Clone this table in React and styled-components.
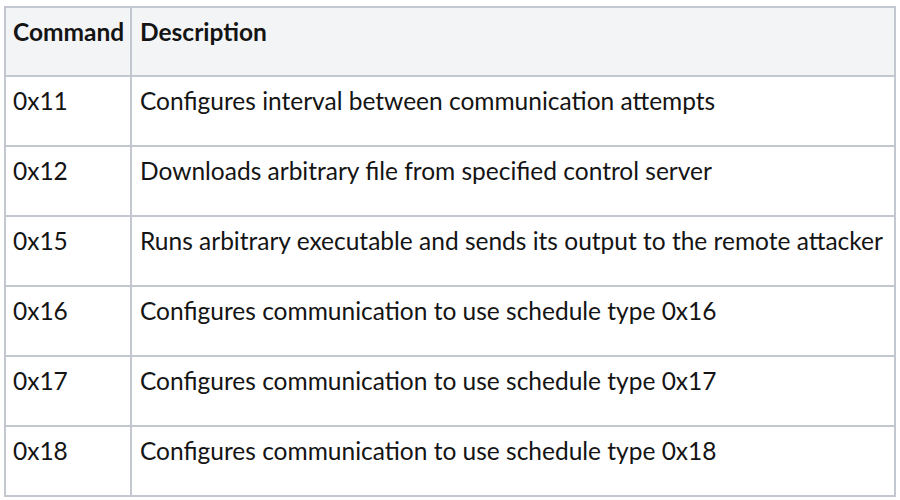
import React from 'react';
import styled, { createGlobalStyle } from 'styled-components';

const GlobalStyle = createGlobalStyle`
  body {
    margin: 0;
    background: #ffffff;
    font-family: Lato, "Open Sans", sans-serif;
  }
`;

const Page = styled.div`
  padding: 6px 4px 0 4px;
`;

const Table = styled.table`
  width: 892px;
  border-collapse: collapse;
  table-layout: fixed;
  color: #141414;
  font-size: 24.5px;
  line-height: 30px;

  & col.cmd {
    width: 126px;
  }
`;

const HeadCell = styled.th`
  box-sizing: border-box;
  background: #f3f4f6;
  border: 2px solid #c3c7cf;
  height: 69px;
  padding: 9px 0 0 ${props => (props.$first ? '7px' : '8px')};
  text-align: left;
  vertical-align: top;
  font-weight: 700;
`;

const Cell = styled.td`
  box-sizing: border-box;
  border: 2px solid #c3c7cf;
  height: 70px;
  padding: 9px 0 0 ${props => (props.$first ? '7px' : '8px')};
  vertical-align: top;
  white-space: nowrap;
`;

const rows = [
  { id: '0x11', text: 'Configures interval between communication attempts' },
  { id: '0x12', text: 'Downloads arbitrary file from specified control server' },
  { id: '0x15', text: 'Runs arbitrary executable and sends its output to the remote attacker' },
  { id: '0x16', text: 'Configures communication to use schedule type 0x16' },
  { id: '0x17', text: 'Configures communication to use schedule type 0x17' },
  { id: '0x18', text: 'Configures communication to use schedule type 0x18' },
];

export default function App() {
  return (
    <Page>
      <GlobalStyle />
      <Table>
        <colgroup>
          <col className="cmd" />
          <col />
        </colgroup>
        <thead>
          <tr>
            <HeadCell $first>Command</HeadCell>
            <HeadCell>Description</HeadCell>
          </tr>
        </thead>
        <tbody>
          {rows.map(({ id, text }) => (
            <tr key={id}>
              <Cell $first>{id}</Cell>
              <Cell>{text}</Cell>
            </tr>
          ))}
        </tbody>
      </Table>
    </Page>
  );
}
